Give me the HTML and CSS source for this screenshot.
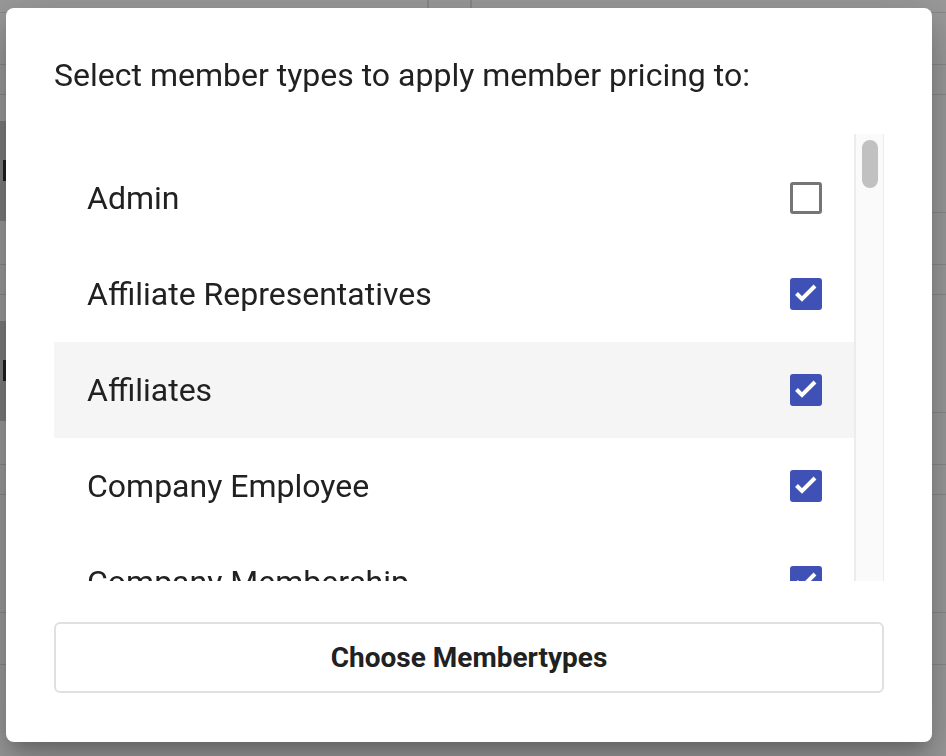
FILE: index.html
```html
<!DOCTYPE html>
<html lang="en">
<head>
<meta charset="utf-8">
<title>Select member types</title>
<link rel="stylesheet" href="styles.css">
</head>
<body>
<div class="page">
  <div class="bg-top"><span class="bg-col"></span><span class="bg-col"></span></div>
  <div class="bg-row"></div>
  <div class="bg-row short"></div>
  <div class="bg-row tall"><span class="bg-cell"><span class="bg-mark"></span></span></div>
  <div class="bg-row"></div>
  <div class="bg-row short"></div>
  <div class="bg-row tall"><span class="bg-cell"><span class="bg-mark"></span></span></div>
  <div class="bg-row"></div>
  <div class="bg-row short"></div>
  <div class="bg-row tall"></div>
  <div class="bg-row"></div>
</div>
<div class="overlay"></div>
<div class="dialog" role="dialog" aria-labelledby="dlg-title">
  <h2 class="dialog-title" id="dlg-title">Select member types to apply member pricing to:</h2>
  <div class="list-wrap">
    <ul class="list">
      <li class="item"><span class="label">Admin</span><span class="box"></span></li>
      <li class="item"><span class="label">Affiliate Representatives</span><span class="box checked"><svg viewBox="0 0 32 32"><polyline points="6.5,15.5 12,21 25,8"/></svg></span></li>
      <li class="item hover"><span class="label">Affiliates</span><span class="box checked"><svg viewBox="0 0 32 32"><polyline points="6.5,15.5 12,21 25,8"/></svg></span></li>
      <li class="item"><span class="label">Company Employee</span><span class="box checked"><svg viewBox="0 0 32 32"><polyline points="6.5,15.5 12,21 25,8"/></svg></span></li>
      <li class="item"><span class="label">Company Membership</span><span class="box checked"><svg viewBox="0 0 32 32"><polyline points="6.5,15.5 12,21 25,8"/></svg></span></li>
    </ul>
    <div class="scrollbar"><div class="thumb"></div></div>
  </div>
  <button class="choose-btn" type="button">Choose Membertypes</button>
</div>
</body>
</html>
```
FILE: styles.css
```css
* { box-sizing: border-box; }
html, body { margin: 0; padding: 0; }
body {
  width: 946px;
  height: 756px;
  overflow: hidden;
  background: #ffffff;
  font-family: Roboto, "Liberation Sans", Arial, sans-serif;
  color: #212121;
}
.page { height: 756px; }
.bg-top { height: 13px; display: flex; border-bottom: 1px solid #e2e2e2; }
.bg-col { width: 43px; border-left: 2px solid #e2e2e2; }
.bg-col:first-child { margin-left: 427px; }
.bg-row { height: 52px; border-bottom: 1px solid #e2e2e2; }
.bg-row.short { height: 30px; }
.bg-row.tall { height: 118px; padding-top: 26px; }
.bg-cell {
  display: block;
  position: relative;
  width: 7px;
  height: 100px;
  background: #cecece;
}
.bg-mark {
  position: absolute;
  left: 3px;
  top: 39px;
  width: 3px;
  height: 21px;
  background: #333;
}
.overlay {
  position: fixed;
  inset: 0;
  background: rgba(0, 0, 0, 0.4);
}
.dialog {
  position: fixed;
  left: 6px;
  top: 8px;
  width: 926px;
  height: 734px;
  background: #ffffff;
  border-radius: 8px;
  padding: 48px 48px 0;
  display: flex;
  flex-direction: column;
  box-shadow: 0 11px 15px -7px rgba(0,0,0,.2), 0 24px 38px 3px rgba(0,0,0,.14), 0 9px 46px 8px rgba(0,0,0,.12);
}
.dialog-title {
  margin: 0;
  font-size: 32px;
  font-weight: 400;
  line-height: 38px;
  color: #212121;
  white-space: nowrap;
}
.list-wrap {
  margin-top: 40px;
  height: 447px;
  display: flex;
}
.list {
  list-style: none;
  margin: 0;
  padding: 16px 0 0;
  flex: 1;
  overflow: hidden;
}
.item {
  height: 96px;
  display: flex;
  align-items: center;
  justify-content: space-between;
  padding: 0 32px 0 33px;
  font-size: 32px;
  color: #212121;
}
.item.hover { background: #f5f5f5; }
.box {
  width: 32px;
  height: 32px;
  flex: none;
  border: 3px solid #757575;
  border-radius: 3px;
}
.box.checked { background: #3f51b5; border: none; }
.box svg {
  display: block;
  width: 32px;
  height: 32px;
  fill: none;
  stroke: #ffffff;
  stroke-width: 4;
  stroke-linecap: butt;
  stroke-linejoin: miter;
}
.scrollbar {
  width: 30px;
  background: #fafafa;
  border-left: 2px solid #ececec;
  border-right: 1px solid #ececec;
  padding: 6px 0 0 6px;
}
.thumb {
  width: 16px;
  height: 48px;
  border-radius: 8px;
  background: #c1c1c1;
}
.choose-btn {
  margin-top: 41px;
  height: 71px;
  width: 100%;
  background: #ffffff;
  border: 2px solid #e0e0e0;
  border-radius: 6px;
  font-family: inherit;
  font-size: 28px;
  font-weight: 700;
  color: #212121;
}
```
